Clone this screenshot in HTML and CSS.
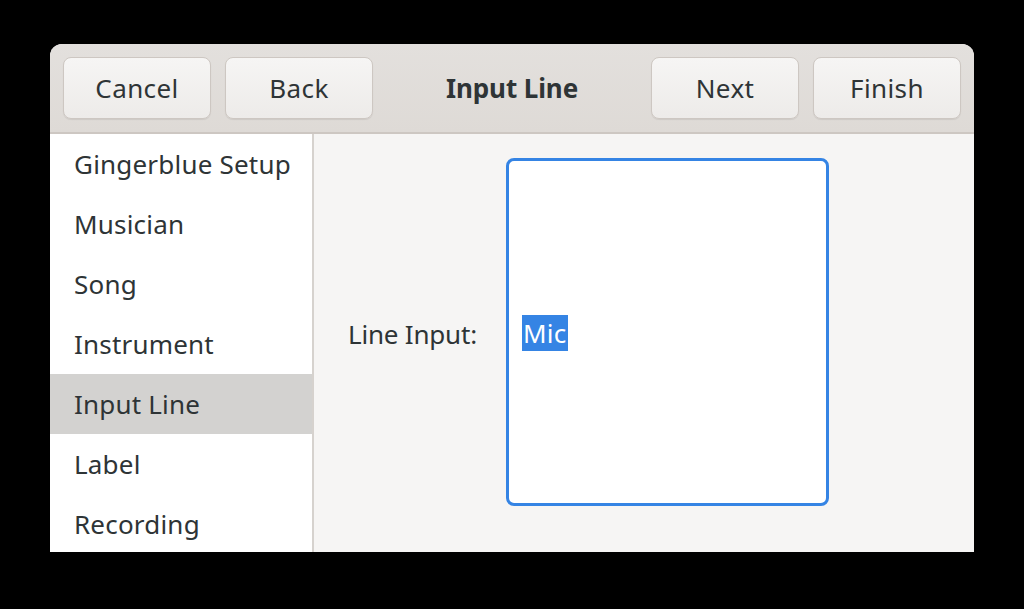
FILE: index.html
```html
<!DOCTYPE html>
<html>
<head>
<meta charset="utf-8">
<link rel="stylesheet" href="styles.css">
</head>
<body>
<div class="window">
  <header class="headerbar">
    <div class="group">
      <button class="btn">Cancel</button>
      <button class="btn">Back</button>
    </div>
    <div class="title">Input Line</div>
    <div class="group">
      <button class="btn">Next</button>
      <button class="btn">Finish</button>
    </div>
  </header>
  <div class="body">
    <nav class="sidebar">
      <div class="row">Gingerblue Setup</div>
      <div class="row">Musician</div>
      <div class="row">Song</div>
      <div class="row">Instrument</div>
      <div class="row selected">Input Line</div>
      <div class="row">Label</div>
      <div class="row">Recording</div>
    </nav>
    <main class="content">
      <div class="label">Line Input:</div>
      <div class="textview"><span class="sel">Mic</span></div>
    </main>
  </div>
</div>
</body>
</html>
```

FILE: styles.css
```css
html, body {
  margin: 0;
  padding: 0;
  background: #000;
  height: 609px;
  overflow: hidden;
}
body {
  padding: 44px 50px 0 50px;
  box-sizing: border-box;
  font-family: "Noto Sans", "Open Sans", sans-serif;
  color: #2e3436;
  letter-spacing: 0.2px;
}
.window {
  width: 924px;
  height: 508px;
  border-radius: 12px 12px 0 0;
  overflow: hidden;
  display: flex;
  flex-direction: column;
  background: #f6f5f4;
}
.headerbar {
  height: 90px;
  flex: none;
  box-sizing: border-box;
  padding: 13px 13px 0 13px;
  background: linear-gradient(#e3e0dd, #dedad6);
  border-bottom: 2px solid #cdc7c2;
  display: flex;
  justify-content: space-between;
  align-items: flex-start;
}
.group {
  display: flex;
  gap: 14px;
}
.btn {
  width: 148px;
  height: 62px;
  border: 1px solid #cdc7c2;
  border-radius: 8px;
  background: linear-gradient(#f6f5f4, #edebe9);
  box-shadow: 0 1px 1px rgba(0,0,0,0.08);
  font-family: inherit;
  font-size: 26px;
  letter-spacing: 0.4px;
  color: #2e3436;
  padding: 0;
}
.title {
  font-weight: bold;
  font-size: 26px;
  line-height: 62px;
  letter-spacing: -0.1px;
}
.body {
  flex: 1;
  display: flex;
  min-height: 0;
}
.sidebar {
  width: 262px;
  flex: none;
  background: #ffffff;
  border-right: 2px solid #d6d2ce;
  display: flex;
  flex-direction: column;
}
.row {
  height: 60px;
  flex: none;
  line-height: 60px;
  padding-left: 24px;
  font-size: 26px;
  box-sizing: border-box;
}
.row.selected {
  background: #d3d2d0;
}
.content {
  flex: 1;
  display: flex;
  align-items: flex-start;
  padding: 24px 0 0 34px;
}
.label {
  font-size: 26px;
  letter-spacing: -0.2px;
  margin-top: 158px;
  width: 158px;
  flex: none;
}
.textview {
  width: 323px;
  height: 348px;
  box-sizing: border-box;
  border: 3px solid #3584e4;
  border-radius: 8px;
  background: #fff;
  padding: 154px 0 0 13px;
  font-size: 26px;
  line-height: 36px;
}
.sel {
  background: #3584e4;
  color: #fff;
  padding: 0 2px 0 1px;
}
```
